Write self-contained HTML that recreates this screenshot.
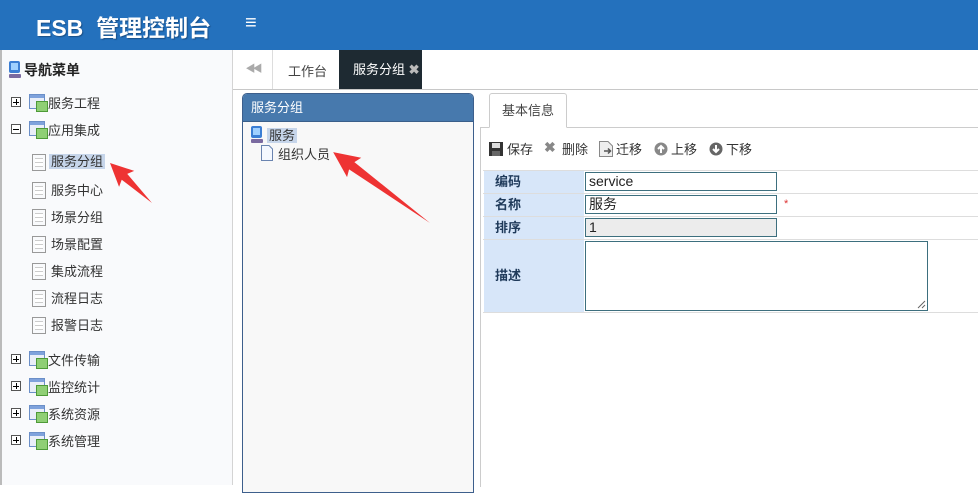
<!DOCTYPE html>
<html><head><meta charset="utf-8"><style>
*{margin:0;padding:0;box-sizing:border-box}
body{width:978px;height:485px;overflow:hidden;position:relative;background:#fff;font-family:"Liberation Sans","Noto Sans CJK SC",sans-serif;font-size:13px;color:#333}
.a{position:absolute}
.hdr{left:0;top:0;width:978px;height:50px;background:#2471bd}
.title{left:36px;top:9px;color:#fff;font-size:23px;font-weight:bold;letter-spacing:0px;text-shadow:1px 1px 1px #1a4f86}
.menu{left:245px;top:12px;color:#fff;font-size:20px;font-weight:bold}
.side{left:0;top:50px;width:233px;height:435px;background:#f9fafc;border-right:1px solid #d4d4d4;border-left:2px solid #bbb}
.navt{left:24px;top:60px;font-size:14px;font-weight:bold;color:#222}
.pm{width:10px;height:10px;border:1px solid #555;background:#fff}
.pm:before{content:"";position:absolute;left:1px;top:3.5px;width:6px;height:1px;background:#000}
.plus:after{content:"";position:absolute;left:3.5px;top:1px;width:1px;height:6px;background:#000}
.fic{width:16px;height:15px;border:1px solid #6b8fc8;background:linear-gradient(#7fa2dc 0 3px,#e9eef8 3px)}
.fic:after{content:"";position:absolute;left:6px;top:6px;width:10px;height:9px;background:#8fcf75;border:1px solid #4e9a38}
.doc{width:14px;height:17px;border:1px solid #999;background:repeating-linear-gradient(#fff 0 3px,#ccc 3px 4px);background-clip:content-box;padding:3px 2px}
.t{font-size:13px;color:#333}
.sel{background:#c6d5ea;padding:0 2px}
.tabbar{left:233px;top:50px;width:745px;height:40px;background:#fff;border-bottom:1px solid #c8c8c8}
.tleft{left:233px;top:50px;width:40px;height:39px;border-right:1px solid #ddd;color:#aaa;text-align:center;line-height:39px;font-size:10px;letter-spacing:-3px}
.tab1{left:288px;top:61px;color:#444}
.tab2{left:339px;top:50px;width:83px;height:39px;background:#1e2a32;color:#fff;line-height:39px;padding-left:14px}
.panel{left:242px;top:93px;width:232px;height:400px;border:1px solid #3d5f8c;border-radius:5px 5px 0 0;background:#f8f8f8}
.ph{left:0;top:0;width:230px;height:28px;background:#4779ad;color:#fff;line-height:27px;padding-left:8px;border-radius:4px 4px 0 0;border-bottom:1px solid #3a5f8a}
.rc{left:480px;top:127px;width:500px;height:360px;border-left:1px solid #ccc;border-top:1px solid #ccc}
.btab{left:489px;top:93px;width:78px;height:35px;border:1px solid #ccc;border-bottom:1px solid #fff;background:#fff;border-radius:3px 3px 0 0;text-align:center;line-height:33px;color:#444}
.row{left:483px;width:495px;border-bottom:1px solid #ddd}
.lab{left:484px;width:100px;background:#d7e6f9;font-weight:bold;color:#1f3a5a;padding-left:11px}
.inp{left:585px;width:192px;height:19px;border:1px solid #3d6f7e;padding-left:3px;line-height:17px;font-size:14px;color:#222;background:#fff}
.tb{top:139px;font-size:13px;color:#333}
</style></head><body>
<div class="a hdr"></div>
<div class="a title">ESB&nbsp; 管理控制台</div>
<div class="a menu">≡</div>

<div class="a side"></div>
<svg class="a" style="left:8px;top:61px" width="14" height="18"><rect x="1" y="0" width="11" height="12" rx="2" fill="#3b7ed4"/><rect x="3" y="2" width="7" height="7" fill="#9fd0ff"/><rect x="1" y="13" width="12" height="4" rx="1" fill="#7a6aa0"/></svg>
<div class="a navt">导航菜单</div>

<div class="a pm plus" style="left:11px;top:97px"></div><div class="a fic" style="left:29px;top:94px"></div><div class="a t" style="left:48px;top:93px">服务工程</div>
<div class="a pm" style="left:11px;top:124px"></div><div class="a fic" style="left:29px;top:121px"></div><div class="a t" style="left:48px;top:120px">应用集成</div>

<div class="a doc" style="left:32px;top:154px"></div><div class="a t" style="left:49px;top:151px"><span class="sel">服务分组</span></div>
<div class="a doc" style="left:32px;top:182px"></div><div class="a t" style="left:51px;top:180px">服务中心</div>
<div class="a doc" style="left:32px;top:209px"></div><div class="a t" style="left:51px;top:207px">场景分组</div>
<div class="a doc" style="left:32px;top:236px"></div><div class="a t" style="left:51px;top:234px">场景配置</div>
<div class="a doc" style="left:32px;top:263px"></div><div class="a t" style="left:51px;top:261px">集成流程</div>
<div class="a doc" style="left:32px;top:290px"></div><div class="a t" style="left:51px;top:288px">流程日志</div>
<div class="a doc" style="left:32px;top:317px"></div><div class="a t" style="left:51px;top:315px">报警日志</div>

<div class="a pm plus" style="left:11px;top:354px"></div><div class="a fic" style="left:29px;top:351px"></div><div class="a t" style="left:48px;top:350px">文件传输</div>
<div class="a pm plus" style="left:11px;top:381px"></div><div class="a fic" style="left:29px;top:378px"></div><div class="a t" style="left:48px;top:377px">监控统计</div>
<div class="a pm plus" style="left:11px;top:408px"></div><div class="a fic" style="left:29px;top:405px"></div><div class="a t" style="left:48px;top:404px">系统资源</div>
<div class="a pm plus" style="left:11px;top:435px"></div><div class="a fic" style="left:29px;top:432px"></div><div class="a t" style="left:48px;top:431px">系统管理</div>

<div class="a tabbar"></div>
<div class="a tleft">◀◀</div>
<div class="a tab1">工作台</div>
<div class="a tab2">服务分组 <span style="color:#bbb;font-weight:bold">✖</span></div>

<div class="a panel"><div class="a ph">服务分组</div></div>
<svg class="a" style="left:250px;top:126px" width="14" height="18"><rect x="1" y="0" width="11" height="12" rx="2" fill="#3b7ed4"/><rect x="3" y="2" width="7" height="7" fill="#9fd0ff"/><rect x="1" y="13" width="12" height="4" rx="1" fill="#7a6aa0"/></svg>
<div class="a t" style="left:267px;top:125px"><span class="sel">服务</span></div>
<svg class="a" style="left:261px;top:145px" width="12" height="16"><path d="M0.5 0.5H8L11.5 4V15.5H0.5Z" fill="#f4f8ff" stroke="#6a84b0"/></svg>
<div class="a t" style="left:278px;top:144px">组织人员</div>

<div class="a rc"></div>
<div class="a btab">基本信息</div>

<svg class="a" style="left:489px;top:142px" width="14" height="14"><rect width="14" height="14" fill="#333"/><rect x="3" y="1" width="8" height="5" fill="#ddd"/><rect x="3" y="9" width="8" height="5" fill="#666"/></svg>
<div class="a tb" style="left:507px">保存</div>
<div class="a tb" style="left:544px;color:#888;font-weight:bold;font-size:14px;top:139px">✖</div>
<div class="a tb" style="left:562px">删除</div>
<svg class="a" style="left:599px;top:141px" width="14" height="16"><path d="M0.5 0.5H9L13.5 5V15.5H0.5Z" fill="#eee" stroke="#888"/><path d="M5 10H11M9 7.5L11.5 10L9 12.5" stroke="#555" fill="none" stroke-width="1.5"/></svg>
<div class="a tb" style="left:616px">迁移</div>
<svg class="a" style="left:654px;top:142px" width="14" height="14"><circle cx="7" cy="7" r="6.5" fill="#888"/><path d="M7 11V4M4 7L7 4L10 7" stroke="#fff" stroke-width="2" fill="none"/></svg>
<div class="a tb" style="left:671px">上移</div>
<svg class="a" style="left:709px;top:142px" width="14" height="14"><circle cx="7" cy="7" r="6.5" fill="#666"/><path d="M7 3V10M4 7L7 10L10 7" stroke="#fff" stroke-width="2" fill="none"/></svg>
<div class="a tb" style="left:726px">下移</div>

<div class="a row" style="top:170px;height:1px;border-top:1px solid #ddd;border-bottom:none"></div>
<div class="a lab" style="top:171px;height:22px;line-height:22px">编码</div><div class="a row" style="top:171px;height:23px"></div>
<div class="a lab" style="top:194px;height:22px;line-height:22px">名称</div><div class="a row" style="top:194px;height:23px"></div>
<div class="a lab" style="top:217px;height:22px;line-height:22px">排序</div><div class="a row" style="top:217px;height:23px"></div>
<div class="a lab" style="top:240px;height:72px;line-height:72px">描述</div><div class="a row" style="top:240px;height:73px"></div>
<div class="a inp" style="top:172px">service</div>
<div class="a inp" style="top:195px">服务</div>
<div class="a" style="left:784px;top:198px;color:#d33;font-size:11px">*</div>
<div class="a inp" style="top:218px;background:#ececec">1</div>
<div class="a inp" style="top:241px;width:343px;height:70px"></div>
<svg class="a" style="left:917px;top:300px" width="9" height="9"><path d="M8 1L1 8M8 5L5 8" stroke="#666"/></svg>

<svg class="a" style="left:0;top:0" width="978" height="485">
<g transform="translate(152,203) rotate(-136.4)"><polygon points="0,0 38,-4 35,-11 58,0 35,11 38,4" fill="#ee3333"/></g>
<g transform="translate(430,223) rotate(-143.8)"><polygon points="0,0 97,-4.5 94,-12 120,0 94,12 97,4.5" fill="#ee3333"/></g>
</svg>
</body></html>
